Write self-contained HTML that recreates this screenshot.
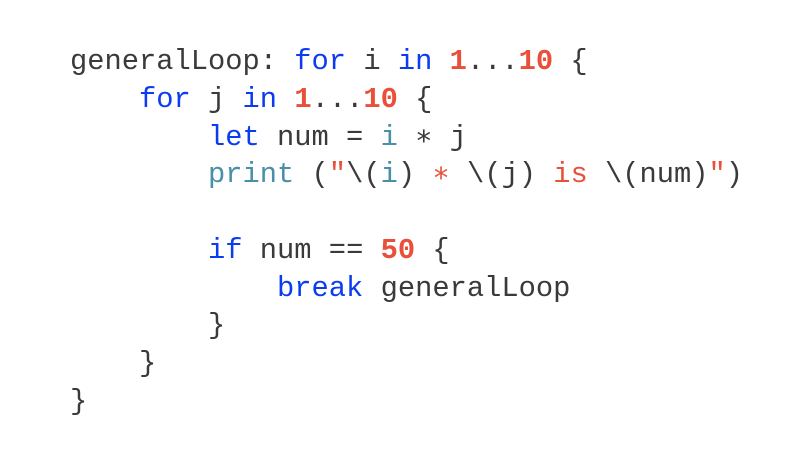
<!DOCTYPE html>
<html><head><style>
html,body{margin:0;padding:0;background:#fff;width:794px;height:454px;overflow:hidden}
pre{position:absolute;left:70px;top:43px;margin:0;font-family:"Liberation Mono",monospace;font-size:28.75px;letter-spacing:0px;line-height:37.75px;color:#3a3a3a}
.k{color:#0b3cf0}.n{color:#e8503a;font-weight:bold}.t{color:#4a8fa8}.s{color:#e8503a}
</style></head><body>
<pre>generalLoop: <span class="k">for</span> i <span class="k">in</span> <span class="n">1</span>...<span class="n">10</span> {
    <span class="k">for</span> j <span class="k">in</span> <span class="n">1</span>...<span class="n">10</span> {
        <span class="k">let</span> num = <span class="t">i</span> ∗ j
        <span class="t">print</span> (<span class="s">"</span>\(<span class="t">i</span>)<span class="s"> ∗ </span>\(j)<span class="s"> is </span>\(num)<span class="s">"</span>)

        <span class="k">if</span> num == <span class="n">50</span> {
            <span class="k">break</span> generalLoop
        }
    }
}</pre>
</body></html>
